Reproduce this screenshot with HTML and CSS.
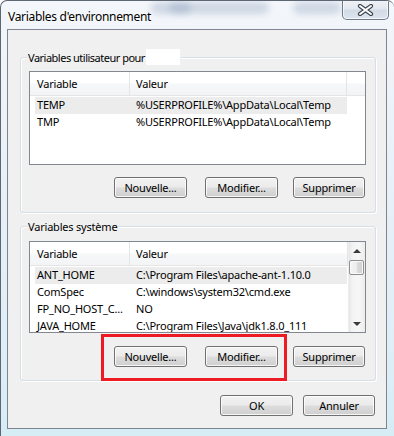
FILE: index.html
```html
<!DOCTYPE html>
<html lang="fr">
<head>
<meta charset="utf-8">
<title>Variables d'environnement</title>
<link rel="stylesheet" href="styles.css">
</head>
<body>
<div class="window">
  <div class="glass glass-a"></div>
  <div class="glass glass-b"></div>
  <div class="glass glass-c"></div>
  <div class="titlebar">
    <span class="title">Variables d'environnement</span>
    <div class="close">
      <svg width="17" height="12" viewBox="0 0 17 12">
        <path d="M3 2 L14 10 M14 2 L3 10" stroke="#3c4452" stroke-width="4.2" stroke-linecap="round" fill="none"/>
        <path d="M3 2 L14 10 M14 2 L3 10" stroke="#ffffff" stroke-width="2" stroke-linecap="round" fill="none"/>
      </svg>
    </div>
  </div>
  <div class="client">
    <div class="group g-user">
      <div class="legend">Variables utilisateur pour <span class="redact"></span></div>
      <div class="list l-user">
        <div class="lv-main">
          <div class="lv-header">
            <div class="hcell h1">Variable</div>
            <div class="hcell h2">Valeur</div>
            <div class="hcell h3"></div>
          </div>
          <div class="lv-rows">
            <div class="row sel"><span class="c1">TEMP</span><span class="c2">%USERPROFILE%\AppData\Local\Temp</span></div>
            <div class="row"><span class="c1">TMP</span><span class="c2">%USERPROFILE%\AppData\Local\Temp</span></div>
          </div>
        </div>
      </div>
      <div class="btns">
        <button class="btn b-new">Nouvelle...</button>
        <button class="btn b-mod">Modifier...</button>
        <button class="btn b-del">Supprimer</button>
      </div>
    </div>

    <div class="group g-sys">
      <div class="legend">Variables système</div>
      <div class="list l-sys">
        <div class="lv-main">
          <div class="lv-header">
            <div class="hcell h1">Variable</div>
            <div class="hcell h2 last">Valeur</div>
          </div>
          <div class="lv-rows">
            <div class="row sel"><span class="c1">ANT_HOME</span><span class="c2">C:\Program Files\apache-ant-1.10.0</span></div>
            <div class="row"><span class="c1">ComSpec</span><span class="c2">C:\windows\system32\cmd.exe</span></div>
            <div class="row"><span class="c1">FP_NO_HOST_C...</span><span class="c2">NO</span></div>
            <div class="row"><span class="c1">JAVA_HOME</span><span class="c2">C:\Program Files\Java\jdk1.8.0_111</span></div>
          </div>
        </div>
        <div class="vscroll">
          <div class="arrow up"></div>
          <div class="thumb"></div>
          <div class="track"></div>
          <div class="arrow down"></div>
        </div>
      </div>
      <div class="btns">
        <button class="btn b-new">Nouvelle...</button>
        <button class="btn b-mod">Modifier...</button>
        <button class="btn b-del">Supprimer</button>
      </div>
      <div class="highlight"></div>
    </div>

    <div class="dlg-btns">
      <button class="btn b-ok">OK</button>
      <button class="btn b-cancel">Annuler</button>
    </div>
  </div>
</div>
</body>
</html>
```

FILE: styles.css
```css
* { box-sizing: border-box; }

html, body {
  margin: 0;
  padding: 0;
  width: 394px;
  height: 436px;
  overflow: hidden;
  background: #ffffff;
}

body {
  font-family: "Noto Sans", "Open Sans", sans-serif;
  font-size: 11px;
  letter-spacing: -0.2px;
  color: #000;
}

.window {
  position: relative;
  width: 394px;
  height: 436px;
  border: 1px solid #5d6673;
  border-bottom: none;
  border-right: none;
  border-radius: 7px 7px 0 0;
  background: linear-gradient(180deg, #f3f6fa 0%, #e9f0f7 40%, #dfeef7 80%, #d6edf6 100%);
  overflow: hidden;
  display: flex;
  flex-direction: column;
}

/* blurred aero glass content behind the title bar */
.glass {
  position: absolute;
  top: 1px;
  height: 12px;
  border-radius: 6px;
  background: rgba(140, 160, 190, 0.35);
  filter: blur(3px);
}
.glass-a { left: 150px; width: 40px; }
.glass-b { left: 168px; width: 100px; }
.glass-c { left: 292px; width: 48px; }

.titlebar {
  position: relative;
  height: 28px;
  display: flex;
  align-items: flex-start;
  flex: none;
}

.title {
  padding: 8px 0 0 7px;
  font-size: 12px;
  letter-spacing: -0.3px;
  line-height: 15px;
  text-shadow: 0 0 6px #fff, 0 0 3px #fff;
}

.close {
  margin-left: auto;
  margin-right: 5px;
  margin-top: -1px;
  width: 47px;
  height: 20px;
  border: 1px solid #6f7a89;
  border-top: none;
  border-radius: 0 0 5px 5px;
  background: linear-gradient(180deg, #f0f3f7 0%, #e3e8ef 45%, #d2dbe6 55%, #dde6ef 100%);
  box-shadow: inset 0 0 0 1px rgba(255,255,255,0.7);
  display: flex;
  align-items: center;
  justify-content: center;
}

.client {
  flex: none;
  margin-left: 6px;
  width: 380px;
  height: 400px;
  border: 1px solid #7e8590;
  background: #f0f0f0;
  display: flex;
  flex-direction: column;
}

.group {
  position: relative;
  margin: 27px 10px 0 12px;
  width: 356px;
  border: 1px solid #d5dfe5;
  border-radius: 3px;
  box-shadow: inset 1px 1px 0 #ffffff, 1px 1px 0 #ffffff;
  display: flex;
  flex-direction: column;
}

.g-sys { margin-top: 13px; }

.legend {
  align-self: flex-start;
  margin: -8px 0 0 6px;
  padding: 0 1px;
  height: 15px;
  line-height: 15px;
  background: #f0f0f0;
  display: flex;
  align-items: center;
  white-space: nowrap;
}
.g-user .legend { letter-spacing: -0.5px; }

.redact {
  display: inline-block;
  width: 34px;
  height: 16px;
  margin-left: 1px;
  margin-top: -1px;
  background: #ffffff;
}

.list {
  margin: 6px 0 0 8px;
  width: 337px;
  border: 1px solid #828790;
  background: #ffffff;
  display: flex;
  overflow: hidden;
}

.l-user { height: 94px; }
.l-sys { height: 92px; margin-top: 7px; }

.lv-main {
  flex: 1;
  min-width: 0;
  display: flex;
  flex-direction: column;
}

.lv-header {
  height: 24px;
  display: flex;
  border-bottom: 1px solid #e5e5e5;
  background: linear-gradient(180deg, #ffffff 0%, #ffffff 45%, #f6f7f8 55%, #f3f4f6 100%);
  flex: none;
}

.hcell {
  height: 23px;
  line-height: 24px;
  border-right: 1px solid #e3e5e8;
  white-space: nowrap;
}
.h1 { width: 100px; padding-left: 7px; }
.h2 { width: 217px; padding-left: 6px; }
.h2.last { flex: 1; }
.h3 { flex: 1; border-right: none; }

.lv-rows {
  padding-top: 1px;
}

.row {
  margin-left: 5px;
  width: 312px;
  height: 17px;
  line-height: 16px;
  display: flex;
  white-space: nowrap;
}
.row.sel { background: #ececec; }

.c1 { flex: none; width: 95px; padding-left: 2px; }
.c2 { flex: none; padding-left: 6px; }

.vscroll {
  width: 17px;
  flex: none;
  display: flex;
  flex-direction: column;
  background: linear-gradient(90deg, #e6e6e6 0%, #f3f3f3 20%, #f7f7f7 60%, #ececec 100%);
  border-left: 1px solid #eeeeee;
}

.arrow {
  height: 17px;
  flex: none;
  display: flex;
  align-items: center;
  justify-content: center;
}
.arrow::before {
  content: "";
  width: 0;
  height: 0;
  border-left: 4px solid transparent;
  border-right: 4px solid transparent;
}
.arrow.up::before { border-bottom: 4px solid #3a3a3a; }
.arrow.down::before { border-top: 4px solid #3a3a3a; }

.thumb {
  height: 15px;
  margin: 1px 1px 0 0;
  border: 1px solid #8e8f8f;
  border-radius: 2px;
  background: linear-gradient(90deg, #f5f5f5 0%, #ececec 50%, #dcdcdc 55%, #cfcfcf 100%);
  box-shadow: inset 0 0 0 1px #fafafa;
  flex: none;
}

.track { flex: 1; }

.btns {
  display: flex;
  justify-content: flex-end;
  margin: 12px 10px 14px 0;
}
.g-sys .btns { margin-top: 13px; margin-bottom: 13px; }

.btn {
  height: 21px;
  padding: 0;
  border: 1px solid #707070;
  border-radius: 3px;
  background: linear-gradient(180deg, #f2f2f2 0%, #ebebeb 48%, #dddddd 52%, #cfcfcf 100%);
  box-shadow: inset 0 0 0 1px rgba(255,255,255,0.8);
  font-family: "Noto Sans", "Open Sans", sans-serif;
  font-size: 11px;
  letter-spacing: -0.2px;
  line-height: 17px;
  color: #000;
}
.b-new { width: 73px; }
.b-mod { width: 73px; margin-left: 18px; }
.b-del { width: 72px; margin-left: 15px; }

.highlight {
  position: absolute;
  left: 80px;
  top: 107px;
  width: 186px;
  height: 47px;
  border: 3px solid #ed1c24;
}

.dlg-btns {
  display: flex;
  justify-content: flex-end;
  margin: 14px 11px 0 0;
}
.b-ok { width: 73px; }
.b-cancel { width: 72px; margin-left: 10px; }
```
